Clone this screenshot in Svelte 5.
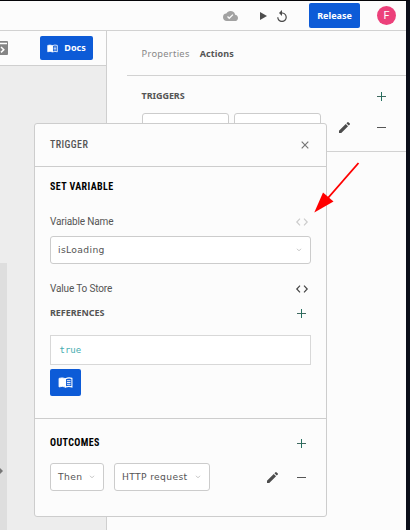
<script>
  const triggerFields = [87, 87];
</script>

{#snippet book()}
  <svg class="book" viewBox="0 0 16 12"><path d="M1 1.500Q4.500 .3 8 1.800V11Q4.500 9.500 1 10.800Z" fill="#fff" stroke="#fff"/><path d="M8 1.800Q11.500 .3 15 1.500V10.800Q11.500 9.500 8 11Z" fill="none" stroke="#fff" stroke-width="1.200"/><path d="M9.600 4H13.500M9.600 6H13.500M9.600 8H13.500" stroke="#fff" fill="none"/></svg>
{/snippet}
{#snippet plus()}
  <svg class="sign" viewBox="0 0 9 9"><path class="across" d="M0 4.500H9"/><path d="M4.500 0V9"/></svg>
{/snippet}
{#snippet minus()}
  <svg class="sign plain" viewBox="0 0 9 9"><path d="M0 4.500H9"/></svg>
{/snippet}
{#snippet pencil()}
  <svg class="pencil" viewBox="3 3 18 18"><path d="M3 17.250V21h3.750L17.800 9.940l-3.750-3.750L3 17.250zM20.710 7.040a1 1 0 0 0 0-1.410l-2.340-2.340a1 1 0 0 0-1.410 0l-1.830 1.830 3.750 3.750 1.830-1.830z"/></svg>
{/snippet}
{#snippet chevron()}
  <svg class="chevron" viewBox="0 0 6 4"><path d="M1 .8L3 2.800 5 .8"/></svg>
{/snippet}
{#snippet code()}
  <svg class="code" viewBox="0 0 12 8"><path d="M4 .7L.8 4 4 7.300M8 .7L11.200 4 8 7.300"/></svg>
{/snippet}

<div class="app">
  <header>
    <svg class="cloud" viewBox="0 4 24 16"><path d="M19.350 10.040A7.490 7.490 0 0 0 12 4C9.110 4 6.600 5.640 5.350 8.040A5.990 5.990 0 0 0 0 14c0 3.310 2.690 6 6 6h13c2.760 0 5-2.240 5-5 0-2.640-2.050-4.780-4.650-4.960zM10 17l-3.500-3.500 1.410-1.410L10 14.170l5.180-5.170 1.410 1.410L10 17z"/></svg>
    <svg class="play" viewBox="0 0 7 8"><path d="M0 0L7 4 0 8Z"/></svg>
    <svg class="undo" viewBox="4 1 16 20"><path d="M12 5V1L7 6l5 5V7c3.310 0 6 2.690 6 6s-2.690 6-6 6-6-2.690-6-6H4c0 4.420 3.580 8 8 8s8-3.580 8-8-3.580-8-8-8z"/></svg>
    <button class="release">Release</button>
    <span class="avatar">F</span>
  </header>
  <main>
    <section class="canvas">
      <div class="toolbar">
        <svg class="console" viewBox="0 0 8 14"><path d="M0 0H7Q8 0 8 1V13Q8 14 7 14H0Z" fill="#858585"/><path d="M0 2.500H7" stroke="#fff" stroke-width="1.500"/><path d="M1 6L3.800 8.700 1 11.400" fill="none" stroke="#fff" stroke-width="1.500"/></svg>
        <button class="docs">{@render book()}<span>Docs</span></button>
      </div>
      <div class="stage"><div class="sheet"><svg viewBox="0 0 3 6"><path d="M0 0L3 3 0 6Z"/></svg></div></div>
    </section>
    <aside>
      <nav><span>Properties</span><b>Actions</b></nav>
      <div class="triggers">
        <div class="row"><span class="label">TRIGGERS</span>{@render plus()}</div>
        <div class="fields">
          {#each triggerFields as width}<div class="field" style="width: {width}px"></div>{/each}
          {@render pencil()}{@render minus()}
        </div>
      </div>
    </aside>
  </main>

  <div class="modal">
    <div class="head"><span class="heading">TRIGGER</span><svg class="close" viewBox="0 0 8 8"><path d="M.7 .7L7.300 7.300M7.300 .7L.7 7.300"/></svg></div>
    <div class="body">
      <h2>SET VARIABLE</h2>
      <div class="row name"><span>Variable Name</span>{@render code()}</div>
      <div class="select wide"><span>isLoading</span>{@render chevron()}</div>
      <div class="row value"><span>Value To Store</span>{@render code()}</div>
      <div class="row refs"><span class="label">REFERENCES</span>{@render plus()}</div>
      <div class="editor">true</div>
      <button class="help" aria-label="Docs">{@render book()}</button>
    </div>
    <div class="outcomes">
      <div class="row"><h2>OUTCOMES</h2>{@render plus()}</div>
      <div class="choices">
        <div class="select then"><span>Then</span>{@render chevron()}</div>
        <div class="select http"><span>HTTP request</span>{@render chevron()}</div>
        {@render pencil()}{@render minus()}
      </div>
    </div>
  </div>

  <svg class="arrow" viewBox="0 0 46 52"><path d="M44.500 1L14 36" stroke="#f00" stroke-width="1.900"/><path d="M.3 50.500L9 30.500 19.500 39.500Z" fill="#f00"/></svg>
</div>

<style>
  * { box-sizing: border-box; }
  .app { position: relative; width: 410px; height: 530px; overflow: hidden; display: flex; flex-direction: column; background: #fcfcfc; border-top: 1px solid #050508; border-right: 4px solid #0b0e19; font: 10px/14px "Noto Sans", sans-serif; color: #555; }
  svg { display: block; flex: none; overflow: visible; }
  button { border: 0; padding: 0; border-radius: 2px; background: #0d5bd7; color: #fff; display: flex; align-items: center; justify-content: center; font: 700 9px/12px "Noto Sans", sans-serif; }
  header { height: 30px; flex: none; display: flex; align-items: center; border-bottom: 1px solid #d2d2d2; padding-left: 223px; }
  .cloud { width: 15px; height: 10px; fill: #a2a2a2; }
  .play { width: 7px; height: 8px; margin-left: 22px; fill: #4c4c4c; }
  .undo { width: 10px; height: 12px; margin-left: 10px; fill: #4c4c4c; }
  .release { width: 51px; height: 25px; margin-left: 22px; }
  .avatar { width: 19px; height: 19px; margin-left: 17px; border-radius: 50%; background: #ec407a; color: #fff; font: 11px/19px Roboto, sans-serif; text-align: center; }
  main { flex: 1; display: flex; min-height: 0; }
  .canvas { width: 107px; border-right: 1px solid #cfcfcf; display: flex; flex-direction: column; }
  .toolbar { height: 35px; border-bottom: 1px solid #cfcfcf; display: flex; align-items: center; }
  .console { width: 8px; height: 14px; }
  .docs { width: 53px; height: 24px; margin-left: 32px; gap: 6px; }
  .docs .book { width: 11px; height: 9px; }
  .stage { flex: 1; background: #ededed; padding-top: 197px; }
  .sheet { width: 7px; height: 100%; background: #dedede; padding-top: 205px; }
  .sheet svg { width: 3px; height: 6px; fill: #777; }
  aside { flex: 1; }
  nav { height: 45px; margin-left: 20px; padding: 16px 0 0 14.500px; border-bottom: 1px solid #d2d2d2; display: flex; gap: 10px; color: #888; font-size: 9.300px; letter-spacing: .3px; }
  nav b { color: #555; font-size: 9px; letter-spacing: .1px; }
  .row { display: flex; justify-content: space-between; align-items: center; }
  .label { font-weight: 700; font-size: 9px; letter-spacing: -.05px; }
  .triggers { height: 76px; border-bottom: 1px solid #d2d2d2; padding: 13px 20px 0 34.500px; }
  .fields { display: flex; align-items: center; margin-top: 10px; gap: 5px; }
  .field { height: 29px; border: 1px solid #ccc; border-radius: 3px; background: #fff; }
  .fields .pencil { margin-left: 13px; }
  .fields .sign { margin-left: auto; }
  .sign { width: 9px; height: 9px; fill: none; stroke: #257060; stroke-width: 1; }
  .sign.plain { stroke: #555; }
  .across { stroke: #40695f; }
  .pencil { width: 11px; height: 11px; fill: #4c4c4c; }
  .modal { position: absolute; left: 34px; top: 122px; width: 293px; height: 394px; background: #fcfcfc; border: 1px solid #cdcdcd; border-radius: 3px; font: 10px/14px Roboto, sans-serif; letter-spacing: -.15px; }
  .head { height: 43px; border-bottom: 1px solid #cdcdcd; padding: 0 17px 0 15px; display: flex; align-items: center; justify-content: space-between; }
  .heading { font-weight: 500; font-stretch: 87%; letter-spacing: .4px; }
  .close { width: 8px; height: 8px; fill: none; stroke: #777; stroke-width: 1.200; }
  .body { height: 252px; padding: 13px 15px 0; border-bottom: 1px solid #cdcdcd; }
  h2 { margin: 0; font: 700 10px/14px Roboto, sans-serif; font-stretch: 87%; letter-spacing: .4px; color: #000; }
  .code { width: 12px; height: 8px; margin-right: 3px; fill: none; stroke: #444; stroke-width: 1.200; }
  .name { margin-top: 21px; }
  .name .code { stroke: #ccc; }
  .select { height: 28px; border: 1px solid #ccc; border-radius: 3px; background: #fff; padding: 0 8px 0 7px; display: flex; align-items: center; justify-content: space-between; font: 9.200px/14px "DejaVu Sans", sans-serif; letter-spacing: .35px; }
  .select.wide { margin-top: 7px; width: 261px; }
  .chevron { width: 6px; height: 4px; fill: none; stroke: #c5c5c5; stroke-width: 1; }
  .value { margin-top: 18px; }
  .refs { margin-top: 10px; }
  .refs .label { font-family: "Noto Sans", sans-serif; }
  .modal .row .sign { margin-right: 5px; }
  .editor { margin-top: 15px; height: 30px; border: 1px solid #d8d8d8; background: #fff; padding: 7px 8.500px; font: 9px/14px "DejaVu Sans Mono", monospace; letter-spacing: 0; color: #45acb0; }
  .help { width: 31px; height: 27px; margin-top: 4px; }
  .help .book { width: 15px; height: 11px; }
  .outcomes { padding: 17px 15px 0; }
  .choices { display: flex; align-items: center; margin-top: 13px; }
  .then { width: 54px; }
  .http { width: 96px; margin-left: 10px; }
  .choices .pencil { margin-left: 57px; }
  .choices .sign { margin: 0 5px 0 auto; }
  .arrow { position: absolute; left: 314px; top: 161px; width: 46px; height: 52px; }
</style>
